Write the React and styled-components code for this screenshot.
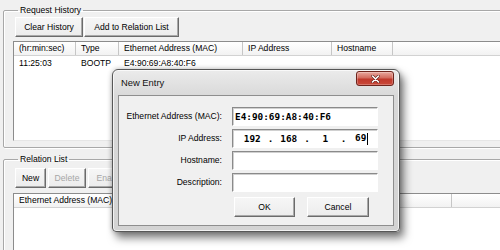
import React from 'react';
import styled, { createGlobalStyle } from 'styled-components';

const GlobalStyle = createGlobalStyle`
  html, body {
    margin: 0;
    padding: 0;
    background: #f0f0f0;
  }
  body {
    font-family: "Liberation Sans", Arial, sans-serif;
    font-size: 8.6px;
    color: #000;
  }
`;

const Screen = styled.div`
  position: relative;
  width: 500px;
  height: 250px;
  overflow: hidden;
  box-sizing: border-box;
  padding: 4px 0 0 3px;
  background: #f0f0f0;
`;

const Group = styled.fieldset`
  width: 540px;
  min-width: 0;
  box-sizing: border-box;
  margin: 0 0 ${({ $gap }) => $gap || 0}px 0;
  padding: ${({ $pad }) => $pad};
  border: 1px solid #a8a8a8;
  border-radius: 2px;
  box-shadow: 1px 1px 0 #fff, inset 1px 1px 0 #fff;
`;

const Legend = styled.legend`
  margin-left: 5px;
  padding: 0 2px;
  line-height: 12px;
`;

const ButtonRow = styled.div`
  display: flex;
  gap: ${({ $gap }) => $gap || 0}px;
  margin: ${({ $m }) => $m || 0};
`;

const Button = styled.button`
  width: ${({ $w }) => $w}px;
  height: 20px;
  box-sizing: border-box;
  padding: 0;
  font: inherit;
  color: ${({ disabled }) => (disabled ? '#a6a6a6' : '#000')};
  background: linear-gradient(#f6f6f6, #ececec);
  border: 1px solid;
  border-color: #fff #6b6b6b #6b6b6b #fff;
  box-shadow: inset -1px -1px 0 #a9a9a9;
  border-radius: 0;
  white-space: nowrap;
  overflow: hidden;
`;

const ListView = styled.div`
  height: ${({ $h }) => $h}px;
  box-sizing: border-box;
  margin-top: ${({ $mt }) => $mt}px;
  background: #fff;
  border: 1px solid;
  border-color: #8c8c8c #e6e6e6 #e6e6e6 #8c8c8c;
`;

const HeaderRow = styled.div`
  display: flex;
  height: 13px;
  background: linear-gradient(#fff, #f2f2f2);
  border-bottom: 1px solid #d2d2d2;
`;

const HeaderCell = styled.div`
  width: ${({ $w }) => $w}px;
  flex: ${({ $w }) => ($w ? 'none' : '1')};
  box-sizing: border-box;
  padding-left: 5px;
  border-right: ${({ $w }) => ($w ? '1px solid #c6c6c6' : 'none')};
  line-height: 13px;
  white-space: nowrap;
  overflow: hidden;
`;

const Row = styled.div`
  display: flex;
  height: 14px;
`;

const Cell = styled.div`
  width: ${({ $w }) => $w}px;
  flex: none;
  box-sizing: border-box;
  padding-left: 5px;
  line-height: 14px;
  white-space: nowrap;
`;

const Dialog = styled.div`
  position: absolute;
  left: 112px;
  top: 69px;
  width: 288px;
  height: 163px;
  box-sizing: border-box;
  display: flex;
  flex-direction: column;
  padding: 0 5px 5px;
  border: 1px solid #575757;
  border-radius: 6px 6px 4px 4px;
  background: linear-gradient(#ebebeb, #d9d9d9 26px, #d3d3d3);
  box-shadow: inset 0 0 0 1px rgba(255, 255, 255, 0.7),
    4px 6px 9px rgba(0, 0, 0, 0.5), 0 0 5px rgba(0, 0, 0, 0.25);
`;

const TitleBar = styled.div`
  display: flex;
  justify-content: space-between;
  height: 25px;
  flex: none;
`;

const Title = styled.div`
  padding-left: 3px;
  line-height: 26px;
  font-size: 9.4px;
  color: #111;
`;

const CloseButton = styled.div`
  width: 38px;
  height: 15px;
  margin-top: 1px;
  box-sizing: border-box;
  display: flex;
  align-items: center;
  justify-content: center;
  border: 1px solid #6e241c;
  border-radius: 3px;
  background: linear-gradient(#e9a99f, #d36c5f 45%, #c0392c 55%, #c9493a);
  box-shadow: inset 0 0 0 1px rgba(255, 255, 255, 0.25);
`;

const Client = styled.div`
  flex: 1;
  box-sizing: border-box;
  padding-top: 11px;
  border: 1px solid #8e8e8e;
  background: #f0f0f0;
`;

const Form = styled.div`
  display: grid;
  grid-template-columns: 103px 146px;
  grid-auto-rows: 19px;
  column-gap: 10px;
  row-gap: 3px;
`;

const Label = styled.div`
  text-align: right;
  line-height: 19px;
  white-space: nowrap;
`;

const Field = styled.div`
  display: flex;
  align-items: center;
  box-sizing: border-box;
  padding-left: ${({ $pl }) => $pl || 2}px;
  background: #fff;
  border: 1px solid;
  border-color: #8a8a8a #fff #fff #8a8a8a;
  box-shadow: inset 1px 1px 0 #d0d0d0;
  font-family: "DejaVu Sans Mono", "Liberation Mono", monospace;
  font-weight: bold;
  font-size: 9.4px;
  white-space: nowrap;
`;

const Octet = styled.span`
  flex: 1;
  text-align: center;
`;

const Dot = styled.span`
  width: 6px;
  text-align: center;
`;

const Caret = styled.span`
  display: inline-block;
  width: 1px;
  height: 12px;
  margin-left: 1px;
  vertical-align: middle;
  background: #000;
`;

const history = [{ time: '11:25:03', type: 'BOOTP', mac: 'E4:90:69:A8:40:F6' }];

export default function App() {
  return (
    <Screen>
      <GlobalStyle />
      <Group $pad="1px 9px 6px" $gap={5}>
        <Legend>Request History</Legend>
        <ButtonRow $gap={1} $m="0 0 0 2px">
          <Button $w={68}>Clear History</Button>
          <Button $w={95}>Add to Relation List</Button>
        </ButtonRow>
        <ListView $h={100} $mt={4}>
          <HeaderRow>
            <HeaderCell $w={62}>(hr:min:sec)</HeaderCell>
            <HeaderCell $w={43}>Type</HeaderCell>
            <HeaderCell $w={124}>Ethernet Address (MAC)</HeaderCell>
            <HeaderCell $w={89}>IP Address</HeaderCell>
            <HeaderCell $w={61}>Hostname</HeaderCell>
            <HeaderCell />
          </HeaderRow>
          {history.map((r) => (
            <Row key={r.time}>
              <Cell $w={62}>{r.time}</Cell>
              <Cell $w={43}>{r.type}</Cell>
              <Cell $w={124}>{r.mac}</Cell>
            </Row>
          ))}
        </ListView>
      </Group>

      <Group $pad="3px 9px 0">
        <Legend>Relation List</Legend>
        <ButtonRow $gap={2} $m="0 0 0 2px">
          <Button $w={31}>New</Button>
          <Button $w={38} disabled>Delete</Button>
          <Button $w={44} disabled>Enable</Button>
        </ButtonRow>
        <ListView $h={80} $mt={5}>
          <HeaderRow>
            <HeaderCell $w={99}>Ethernet Address (MAC)</HeaderCell>
            <HeaderCell $w={339} />
            <HeaderCell />
          </HeaderRow>
        </ListView>
      </Group>

      <Dialog>
        <TitleBar>
          <Title>New Entry</Title>
          <CloseButton>
            <svg width="9" height="8" viewBox="0 0 9 8">
              <path d="M1.5 1 L7.5 7 M7.5 1 L1.5 7" stroke="#5a1a14" strokeWidth="2.6" strokeLinecap="round" />
              <path d="M1.5 1 L7.5 7 M7.5 1 L1.5 7" stroke="#fff" strokeWidth="1.6" strokeLinecap="round" />
            </svg>
          </CloseButton>
        </TitleBar>
        <Client>
          <Form>
            <Label>Ethernet Address (MAC):</Label>
            <Field>E4:90:69:A8:40:F6</Field>
            <Label>IP Address:</Label>
            <Field $pl={4}>
              <Octet>192</Octet>
              <Dot>.</Dot>
              <Octet>168</Octet>
              <Dot>.</Dot>
              <Octet>1</Octet>
              <Dot>.</Dot>
              <Octet>
                69
                <Caret />
              </Octet>
            </Field>
            <Label>Hostname:</Label>
            <Field />
            <Label>Description:</Label>
            <Field />
          </Form>
          <ButtonRow $gap={12} $m="5px 0 0 115px">
            <Button $w={61}>OK</Button>
            <Button $w={62}>Cancel</Button>
          </ButtonRow>
        </Client>
      </Dialog>
    </Screen>
  );
}
